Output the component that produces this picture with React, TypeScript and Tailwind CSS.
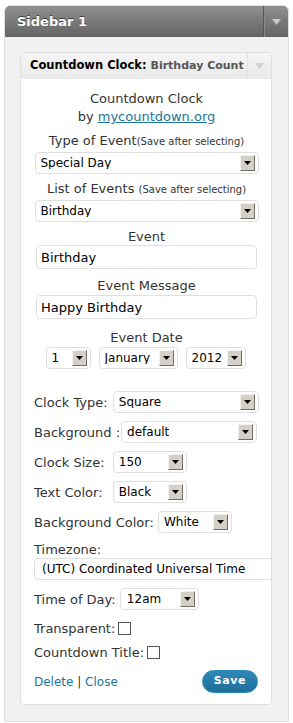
import type { ReactNode } from "react";

const font = "font-['DejaVu_Sans',Verdana,sans-serif]";

const Arrow = () => (
  <span className="flex h-[16px] w-[15px] shrink-0 items-center justify-center border border-t-[#f4f3ee] border-l-[#f4f3ee] border-r-[#716f64] border-b-[#716f64] bg-[#d4d0c8]">
    <svg width="7" height="4" viewBox="0 0 7 4">
      <path d="M0 0h7L3.5 4z" fill="#000" />
    </svg>
  </span>
);

const Select = ({ value, className = "" }: { value: string; className?: string }) => (
  <div
    className={`flex h-[22px] shrink-0 items-center justify-between rounded-[4px] border border-[#dfdfdf] bg-white pl-[5px] pr-[3px] text-[12px] leading-none text-black ${className}`}
  >
    <span className="truncate">{value}</span>
    <Arrow />
  </div>
);

const TextInput = ({ value, className = "" }: { value: string; className?: string }) => (
  <div
    className={`flex h-[24px] w-[221px] items-center self-center rounded-[4px] border border-[#dfdfdf] bg-white pl-[4px] text-[13px] leading-none text-black ${className}`}
  >
    {value}
  </div>
);

const Label = ({ children, className = "" }: { children: ReactNode; className?: string }) => (
  <div className={`h-[18px] whitespace-nowrap text-center text-[13px] leading-[18px] ${className}`}>{children}</div>
);

const Row = ({ label, children, className = "" }: { label: string; children: ReactNode; className?: string }) => (
  <div className={`flex items-center text-[13px] leading-none text-[#333] ${className}`}>
    <span className="whitespace-pre">{label}</span>
    {children}
  </div>
);

const Checkbox = () => <span className="ml-[3px] inline-block h-[13px] w-[13px] border border-[#555] bg-white" />;

export default function App() {
  return (
    <div className={`min-h-[723px] bg-white px-[4px] pt-[5px] ${font}`}>
      <div className="w-[285px] overflow-hidden rounded-t-[6px] border border-[#dfdfdf] bg-[#f1f1f1]">
        {/* sidebar header */}
        <div className="flex h-[31px] items-stretch bg-gradient-to-b from-[#909090] to-[#646464]">
          <div className="flex flex-1 items-center pl-[12px] text-[13px] font-bold text-white [text-shadow:0_-1px_0_#3f3f3f]">
            Sidebar 1
          </div>
          <div className="flex w-[25px] items-center justify-center border-l border-l-[#585858] shadow-[inset_1px_0_0_#8a8a8a]">
            <svg width="9" height="6" viewBox="0 0 9 6">
              <path d="M0 0h9L4.5 6z" fill="#c8c8c8" />
            </svg>
          </div>
        </div>

        <div className="pl-[15px] pr-[16px] pt-[15px] pb-[16px]">
          <div className="overflow-hidden rounded-[4px] border border-[#dfdfdf] bg-white">
            {/* widget header */}
            <div className="flex h-[26px] items-stretch bg-gradient-to-b from-[#f5f5f5] to-[#e9e9e9]">
              <div className="flex min-w-0 flex-1 items-center overflow-hidden whitespace-nowrap pl-[9px]">
                <span className="text-[11.5px] font-bold text-black">Countdown Clock:</span>
                <span className="ml-[4px] text-[11px] font-bold text-[#555]">Birthday Count</span>
              </div>
              <div className="flex w-[24px] items-center justify-center border-l border-l-[#e2e2e2]">
                <svg width="9" height="6" viewBox="0 0 9 6">
                  <path d="M0 0h9L4.5 6z" fill="#d0d0d0" />
                </svg>
              </div>
            </div>

            {/* widget body */}
            <div className="flex flex-col pl-[13px] pr-[12px] pt-[11px] pb-[11px] text-[12px] text-[#333]">
              <Label>Countdown Clock</Label>
              <Label>
                by <span className="text-[#21759b] underline">mycountdown.org</span>
              </Label>

              <Label className="mt-[6px]">
                Type of Event<span className="text-[10px] leading-none">(Save after selecting)</span>
              </Label>
              <Select value="Special Day" className="mt-[2px] w-[224px] self-center" />

              <Label className="mt-[6px]">
                List of Events <span className="text-[10px] leading-none">(Save after selecting)</span>
              </Label>
              <Select value="Birthday" className="mt-[2px] w-[224px] self-center" />

              <Label className="mt-[6px]">Event</Label>
              <TextInput value="Birthday" className="-mt-[1px]" />

              <Label className="mt-[8px]">Event Message</Label>
              <TextInput value="Happy Birthday" />

              <Label className="mt-[10px]">Event Date</Label>
              <div className="flex justify-center gap-[8px] pr-[2px]">
                <Select value="1" className="w-[45px]" />
                <Select value="January" className="w-[79px]" />
                <Select value="2012" className="w-[60px]" />
              </div>

              <div className="mt-[22px] flex flex-col gap-[8px]">
                <Row label="Clock Type: ">
                  <Select value="Square" className="ml-[1px] w-[146px]" />
                </Row>
                <Row label="Background :">
                  <Select value="default" className="ml-[1px] w-[136px]" />
                </Row>
                <Row label="Clock Size:  ">
                  <Select value="150" className="w-[74px]" />
                </Row>
                <Row label="Text Color:  ">
                  <Select value="Black" className="ml-[2px] w-[74px]" />
                </Row>
                <Row label="Background Color: ">
                  <Select value="White" className="w-[74px]" />
                </Row>
              </div>

              <div className="mt-[7px] flex h-[18px] items-center text-[13px] leading-none">Timezone:</div>
              <div className="-mr-[30px] flex h-[22px] items-center rounded-[4px] border border-[#dfdfdf] bg-white pl-[7px] text-[12px] leading-none text-black">
                (UTC) Coordinated Universal Time
              </div>

              <Row label="Time of Day: " className="mt-[8px]">
                <Select value="12am" className="w-[79px] pl-[6px]" />
              </Row>

              <Row label="Transparent:" className="mt-[9px] h-[18px]">
                <Checkbox />
              </Row>
              <Row label="Countdown Title:" className="mt-[6px] h-[18px]">
                <Checkbox />
              </Row>

              <div className="mt-[9px] flex h-[23px] items-center justify-between">
                <div className="text-[12px]">
                  <span className="text-[#21759b]">Delete</span>
                  <span className="text-[#333]"> | </span>
                  <span className="text-[#21759b]">Close</span>
                </div>
                <div className="mr-[1px] flex h-[23px] w-[56px] items-center justify-center rounded-full border border-[#298cba] bg-gradient-to-b from-[#2e88b8] to-[#1f6f98] text-[11px] font-bold tracking-[0.6px] text-white">
                  Save
                </div>
              </div>
            </div>
          </div>
        </div>
      </div>
    </div>
  );
}
